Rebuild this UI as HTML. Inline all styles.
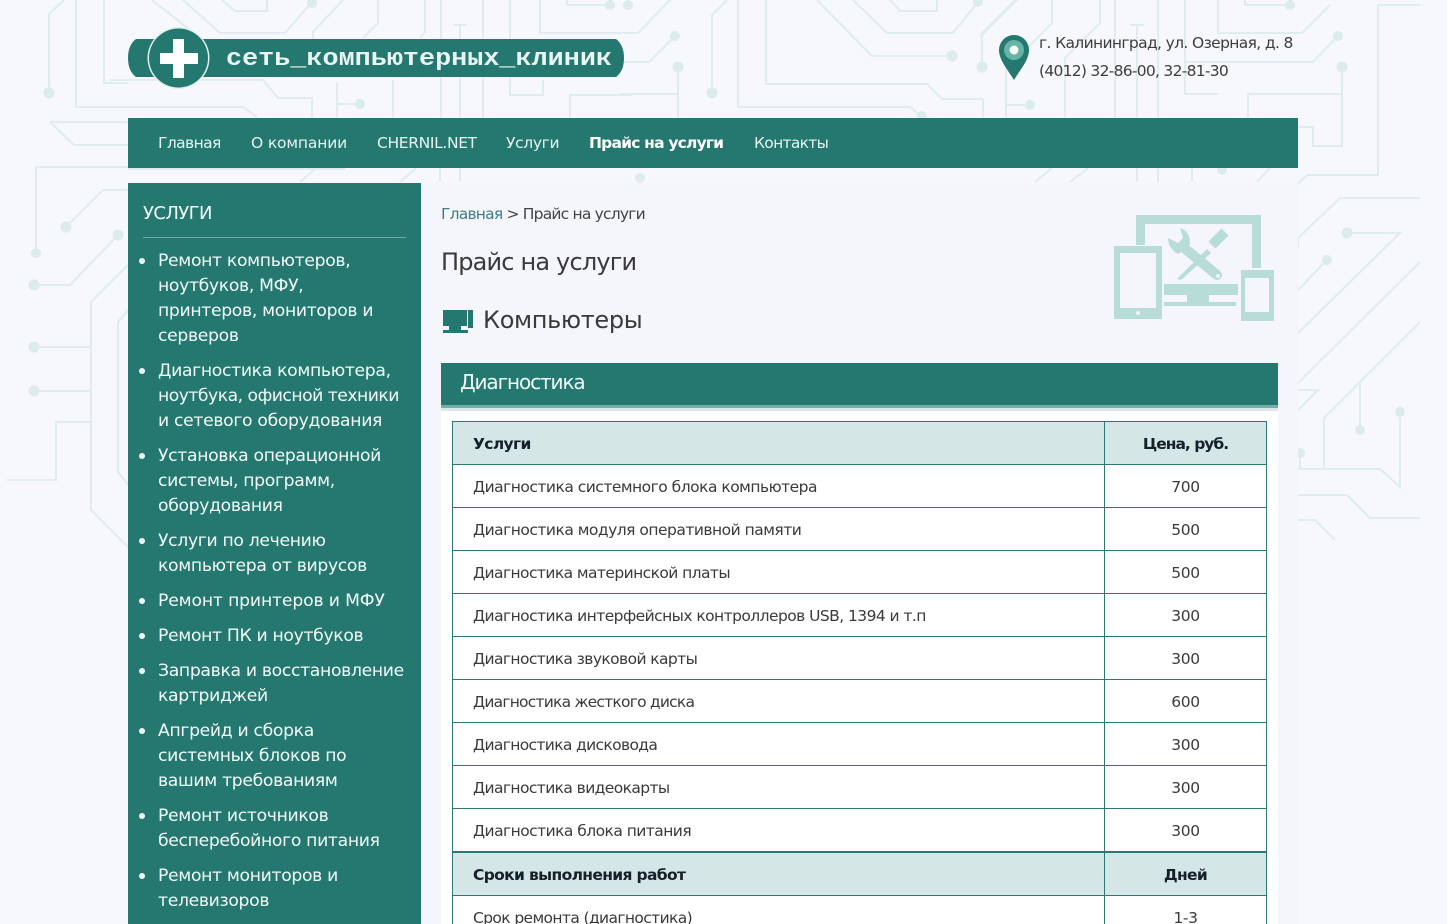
<!DOCTYPE html>
<html lang="ru"><head><meta charset="utf-8"><title>Прайс на услуги</title>
<style>
html,body{margin:0;padding:0;width:1447px;height:924px;overflow:hidden;background:#f6f8fb}
body{position:relative;font-family:"DejaVu Sans","Liberation Sans",sans-serif;color:#333}
.a{position:absolute;white-space:nowrap}
svg{position:absolute;left:0;top:0}
.nav{color:#e6f4f1;font-size:15.5px;letter-spacing:-.35px;top:133px;line-height:20px}
.s{color:#f2faf8;font-size:17.2px;letter-spacing:-.32px;left:158px;line-height:25px;margin-top:1px}
.b{position:absolute;left:139px;width:6px;height:6px;border-radius:50%;background:#f2faf8}
.t{font-size:15.5px;letter-spacing:-.56px;left:473px;line-height:20px;color:#3a3a3a;margin-top:.5px}
.p{font-size:15.5px;letter-spacing:-.4px;left:1105px;width:161px;text-align:center;line-height:20px;color:#3a3a3a;margin-top:.5px}
.h{font-weight:bold;color:#14202a;letter-spacing:-.65px}
.r{position:absolute;left:452px;width:815px;height:1px;background:#2f7772}
</style></head><body>
<svg width="1447" height="924" fill="none" stroke="#e0edee" stroke-width="2">
<g>
<path d="M64 0L49 14V93M76 0V107H128M104 0V83H128M50 122H128M50 122L74 145H128M128 167H36V253M66 227L103 190H128M34 285H70L118 235M128 265L91 302V510L128 547M34 347H91M34 391H91M128 310L118 322V472L128 485M7 480H56V422H91"/>
<path d="M152 0L190 30M183 0L220 33H285L312 2M222 0L235 11H267V0M343 0L313 32V40M378 0V23L363 38M425 0V32L420 38M441 0V118M483 0V118M460 25V118M453 25H467M510 0V95H543V80M570 118V95H632M540 0V33H622M567 0V5H610M110 80H263L278 98H312V118M110 107H243L257 117M337 82V118M337 104H360M393 80V118"/>
<path d="M620 33H638L670 0M675 36L649 62H620M678 67V118M620 94H678M727 0L712 15V93M738 0V107H910L922 117M766 0V84H927L942 99H983V118M817 0L872 56H952M853 0L887 33H953L978 2M890 0L900 11H937V0M1015 0L982 33V67"/>
<path d="M1006 70V118M1006 105H1030M1017 0L980 37M1052 0V23L1006 70M1100 0V23L1065 58V118M1115 0V118M1158 0V118M1137 25V118M1130 25H1144M1185 0V94H1218M1218 0V33H1302L1330 5M1245 0V5H1290M1338 36L1313 62H1185M1248 118V94H1342M1342 67V146H1313V127H1298M1298 183L1308 175H1378V5H1420"/>
<path d="M1035 182L1052 168M1070 182L1088 168M1137 168V182M1158 168V182M1192 168V182M1257 182L1270 168M440 168V182M300 182L316 168M400 182L416 168M460 168V182M128 169H345"/>
<path d="M1298 248V238L1340 198H1420M1347 233H1400L1298 333M1327 260L1298 290M1420 262L1298 383M1420 322L1324 418V469M1360 383V430M1400 412V487L1380 469H1298M1300 453V469M1298 390H1318L1298 410M1298 495H1347L1370 518H1420M1298 520H1315L1335 540"/>
</g>
<g fill="#dcebec" stroke="none">
<circle cx="49" cy="93" r="5.5"/><circle cx="36" cy="253" r="5"/><circle cx="66" cy="227" r="5.5"/><circle cx="118" cy="235" r="5.5"/><circle cx="34" cy="285" r="5.5"/><circle cx="34" cy="347" r="5.5"/><circle cx="34" cy="391" r="5.5"/>
<circle cx="312" cy="3" r="5"/><circle cx="610" cy="5" r="5"/><circle cx="360" cy="104" r="5"/><circle cx="675" cy="36" r="5"/><circle cx="678" cy="67" r="5.5"/><circle cx="712" cy="93" r="5.5"/><circle cx="952" cy="56" r="5.5"/><circle cx="922" cy="116" r="5"/><circle cx="978" cy="2" r="5"/><circle cx="982" cy="67" r="5.5"/><circle cx="1030" cy="105" r="5"/><circle cx="1290" cy="5" r="5"/><circle cx="1338" cy="36" r="5"/><circle cx="1342" cy="67" r="5.5"/><circle cx="640" cy="178" r="5"/><circle cx="1222" cy="170" r="5"/>
<circle cx="1347" cy="233" r="5.5"/><circle cx="1327" cy="260" r="5"/><circle cx="1360" cy="430" r="5"/><circle cx="1400" cy="412" r="5"/><circle cx="1300" cy="453" r="5"/><circle cx="628" cy="5" r="5"/>
</g>
</svg>

<div class="a" style="left:128px;top:183px;width:1170px;height:741px;background:#f5f6fc"></div>

<svg width="1447" height="124">
<path d="M136 39H616Q624 45 624 58Q624 71 616 77H136Q128 71 128 58Q128 45 136 39Z" fill="#24786f"/>
<circle cx="178.500" cy="58" r="31" fill="#dff0ee"/>
<circle cx="178.500" cy="58" r="29.500" fill="#24786f"/>
<path d="M173 39H184V53H198V64H184V78H173V64H160V53H173Z" fill="#fff"/>
<text transform="translate(226 65) scale(1.117 1)" style="font-family:'Liberation Mono',monospace;font-weight:bold;font-size:24px" fill="#e9f5f3">сеть_компьютерных_клиник</text>
<path d="M1014 35A15 15 0 0 1 1029 50C1029 60 1020 70 1014 80C1008 70 999 60 999 50A15 15 0 0 1 1014 35Z" fill="#24786f"/>
<circle cx="1014" cy="50" r="10" fill="#68b3a6"/><circle cx="1014" cy="50" r="4.500" fill="#f4fbfa"/>
</svg>

<div class="a" style="left:1039px;top:33px;font-size:15.5px;letter-spacing:-.64px;line-height:20px;color:#3d3d3d">г. Калининград, ул. Озерная, д. 8</div>
<div class="a" style="left:1039px;top:61px;font-size:15.5px;letter-spacing:-.72px;line-height:20px;color:#3d3d3d">(4012) 32-86-00, 32-81-30</div>

<div class="a" style="left:128px;top:118px;width:1170px;height:50px;background:#24786f"></div>
<div class="a nav" style="left:158px;letter-spacing:-.6px">Главная</div>
<div class="a nav" style="left:251px;letter-spacing:-.15px">О компании</div>
<div class="a nav" style="left:377px">CHERNIL.NET</div>
<div class="a nav" style="left:506px">Услуги</div>
<div class="a nav" style="left:589px;font-weight:bold;color:#fff;letter-spacing:-.8px">Прайс на услуги</div>
<div class="a nav" style="left:754px;letter-spacing:-.7px">Контакты</div>

<div class="a" style="left:128px;top:183px;width:293px;height:741px;background:#24786f"></div>
<div class="a" style="left:143px;top:202px;font-size:18px;letter-spacing:-.6px;line-height:24px;color:#f2faf8">УСЛУГИ</div>
<div class="a" style="left:143px;top:237px;width:263px;height:1px;background:#6ea9a3"></div>

<i class="b" style="top:258px"></i>
<div class="a s" style="top:248px">Ремонт компьютеров,</div>
<div class="a s" style="top:273px">ноутбуков, МФУ,</div>
<div class="a s" style="top:298px">принтеров, мониторов и</div>
<div class="a s" style="top:323px">серверов</div>
<i class="b" style="top:368px"></i>
<div class="a s" style="top:358px">Диагностика компьютера,</div>
<div class="a s" style="top:383px;letter-spacing:-.5px">ноутбука, офисной техники</div>
<div class="a s" style="top:408px">и сетевого оборудования</div>
<i class="b" style="top:453px"></i>
<div class="a s" style="top:443px">Установка операционной</div>
<div class="a s" style="top:468px">системы, программ,</div>
<div class="a s" style="top:493px">оборудования</div>
<i class="b" style="top:538px"></i>
<div class="a s" style="top:528px">Услуги по лечению</div>
<div class="a s" style="top:553px">компьютера от вирусов</div>
<i class="b" style="top:598px"></i>
<div class="a s" style="top:588px;letter-spacing:-.15px">Ремонт принтеров и МФУ</div>
<i class="b" style="top:633px"></i>
<div class="a s" style="top:623px">Ремонт ПК и ноутбуков</div>
<i class="b" style="top:668px"></i>
<div class="a s" style="top:658px">Заправка и восстановление</div>
<div class="a s" style="top:683px">картриджей</div>
<i class="b" style="top:728px"></i>
<div class="a s" style="top:718px">Апгрейд и сборка</div>
<div class="a s" style="top:743px">системных блоков по</div>
<div class="a s" style="top:768px">вашим требованиям</div>
<i class="b" style="top:813px"></i>
<div class="a s" style="top:803px">Ремонт источников</div>
<div class="a s" style="top:828px">бесперебойного питания</div>
<i class="b" style="top:873px"></i>
<div class="a s" style="top:863px">Ремонт мониторов и</div>
<div class="a s" style="top:888px">телевизоров</div>

<div class="a" style="left:441px;top:204px;font-size:15.5px;letter-spacing:-.8px;line-height:20px;color:#444"><span style="color:#3d7f85">Главная</span> &gt; Прайс на услуги</div>
<div class="a" style="left:441px;top:246px;font-size:24px;letter-spacing:-.82px;line-height:32px;color:#3a3a3a">Прайс на услуги</div>
<div class="a" style="left:483px;top:304px;font-size:24px;letter-spacing:-.35px;line-height:32px;color:#3a3a3a">Компьютеры</div>

<svg width="1447" height="340" style="z-index:1">
<path d="M443 310H467V326H443ZM468 310H473V328H468Z" fill="#24786f"/>
<path d="M449 326H461V330H449ZM443 330H468V333H443Z" fill="#24786f"/>
<g fill="#b8dcd8">
<path fill-rule="evenodd" d="M1136 215H1261V268H1252V224H1145V245H1136Z"/>
<path fill-rule="evenodd" d="M1114 246H1162V319H1114ZM1120 253V308H1156V253Z"/>
<circle cx="1138" cy="313" r="2" fill="#f5f6fc"/>
<path fill-rule="evenodd" d="M1241 270H1274V321H1241ZM1245 278V312H1269V278Z"/>
<path d="M1164 284H1238V295H1164ZM1164 302H1187V295H1209V302H1236V306H1164Z"/>
<path d="M1180 228Q1190 231 1190 243L1188 248L1178 254Q1168 248 1168 238L1178 243L1183 238Z"/>
<path d="M1207 249L1211 253L1181 280L1177 279Z"/>
<path d="M1212 245L1225 232" stroke="#b8dcd8" stroke-width="10"/>
<path d="M1183 247L1217 275" stroke="#b8dcd8" stroke-width="10" stroke-linecap="round"/>
<circle cx="1218" cy="276" r="2" fill="#f5f6fc"/>
</g>
</svg>

<div class="a" style="left:441px;top:363px;width:837px;height:42px;background:#24786f"></div>
<div class="a" style="left:441px;top:405px;width:837px;height:3px;background:#6fb0a9"></div>
<div class="a" style="left:441px;top:408px;width:837px;height:3px;background:#dde6e7"></div>
<div class="a" style="left:441px;top:411px;width:837px;height:513px;background:#fff"></div>
<div class="a" style="left:460px;top:369px;font-size:20px;letter-spacing:-1.1px;line-height:27px;color:#f2faf8">Диагностика</div>

<div class="a" style="left:452px;top:421px;width:815px;height:43px;background:#d4e6e6"></div>
<div class="a" style="left:452px;top:852px;width:815px;height:43px;background:#d4e6e6"></div>
<div class="r" style="top:421px"></div><div class="r" style="top:464px"></div><div class="r" style="top:507px"></div><div class="r" style="top:550px"></div><div class="r" style="top:593px"></div><div class="r" style="top:636px"></div><div class="r" style="top:679px"></div><div class="r" style="top:722px"></div><div class="r" style="top:765px"></div><div class="r" style="top:808px"></div><div class="r" style="top:851px;height:2px"></div><div class="r" style="top:895px"></div>
<div class="a" style="left:452px;top:421px;width:1px;height:503px;background:#2f7772"></div>
<div class="a" style="left:1104px;top:421px;width:1px;height:503px;background:#2f7772"></div>
<div class="a" style="left:1266px;top:421px;width:1px;height:503px;background:#2f7772"></div>

<div class="a t h" style="top:433px">Услуги</div><div class="a p h" style="top:433px;letter-spacing:-1px">Цена, руб.</div>
<div class="a t" style="top:476px;letter-spacing:-.51px">Диагностика системного блока компьютера</div><div class="a p" style="top:476px">700</div>
<div class="a t" style="top:519px;letter-spacing:-.51px">Диагностика модуля оперативной памяти</div><div class="a p" style="top:519px">500</div>
<div class="a t" style="top:562px;letter-spacing:-.58px">Диагностика материнской платы</div><div class="a p" style="top:562px">500</div>
<div class="a t" style="top:605px">Диагностика интерфейсных контроллеров USB, 1394 и т.п</div><div class="a p" style="top:605px">300</div>
<div class="a t" style="top:648px;letter-spacing:-.6px">Диагностика звуковой карты</div><div class="a p" style="top:648px">300</div>
<div class="a t" style="top:691px;letter-spacing:-.78px">Диагностика жесткого диска</div><div class="a p" style="top:691px">600</div>
<div class="a t" style="top:734px;letter-spacing:-.65px">Диагностика дисковода</div><div class="a p" style="top:734px">300</div>
<div class="a t" style="top:777px;letter-spacing:-.6px">Диагностика видеокарты</div><div class="a p" style="top:777px">300</div>
<div class="a t" style="top:820px;letter-spacing:-.55px">Диагностика блока питания</div><div class="a p" style="top:820px">300</div>
<div class="a t h" style="top:864px">Сроки выполнения работ</div><div class="a p h" style="top:864px">Дней</div>
<div class="a t" style="top:907px;letter-spacing:-.62px">Срок ремонта (диагностика)</div><div class="a p" style="top:907px">1-3</div>
</body></html>
